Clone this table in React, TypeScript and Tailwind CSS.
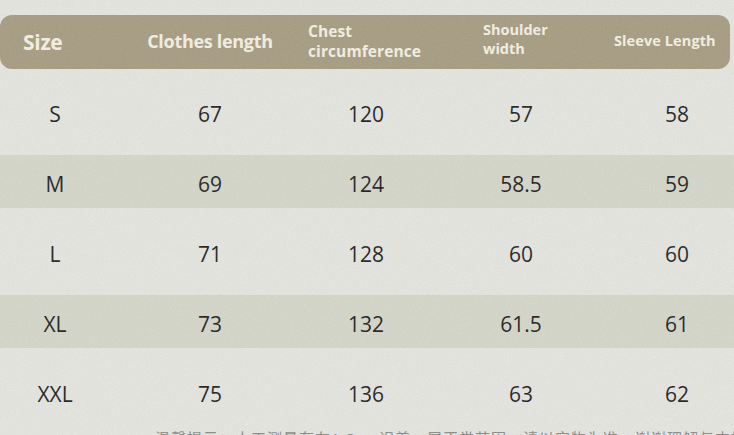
import React from "react";

const rows = [
  ["S", "67", "120", "57", "58"],
  ["M", "69", "124", "58.5", "59"],
  ["L", "71", "128", "60", "60"],
  ["XL", "73", "132", "61.5", "61"],
  ["XXL", "75", "136", "63", "62"],
];

export default function App() {
  return (
    <div
      className="relative w-[734px] h-[435px] overflow-hidden bg-[#e6e6e1] pt-[15px]"
      style={{ fontFamily: '"Open Sans", "Noto Sans", "Noto Sans CJK SC", sans-serif' }}
    >
      {/* header */}
      <div className="grid grid-cols-[110px_200px_173px_134px_113px] h-[54px] w-[730px] rounded-[12px] bg-[#a69b80] text-[#f5f1e3] font-bold items-center">
        <div className="pl-[23px] text-[21px] leading-none pt-[1px] tracking-[-0.3px]">Size</div>
        <div className="text-center text-[18px] leading-none -mt-[3px] tracking-[-0.3px]">Clothes length</div>
        <div className="text-[15.5px] leading-[20px] -ml-[2px] -mt-[2px] tracking-[0.1px]">
          <div>Chest</div>
          <div>circumference</div>
        </div>
        <div className="text-[14.5px] leading-[19px] -mt-[7px]">
          <div>Shoulder</div>
          <div>width</div>
        </div>
        <div className="text-[14.5px] leading-none -ml-[3px] -mt-[1px] tracking-[0.1px]">Sleeve Length</div>
      </div>

      <div className="mt-[11px]">
        {rows.map((r, i) => (
          <div key={r[0]} className="h-[70px] pt-[5px]">
            <div
              className={`grid grid-cols-[110px_200px_112px_198px_114px] h-[53px] items-center pt-[6px] text-[21px] text-[#1c1c1c] ${
                i % 2 === 1 ? "bg-[#d6d7ca]" : ""
              }`}
            >
              {r.map((c, j) => (
                <div key={j} className="text-center leading-none">
                  {c}
                </div>
              ))}
            </div>
          </div>
        ))}
      </div>

      <div className="absolute left-[155px] top-[427px] whitespace-nowrap text-[15px] text-[#8a8a86] tracking-[1px]">
        温馨提示：人工测量存在1-3cm误差，属正常范围，请以实物为准，谢谢理解与支持
      </div>

      <svg className="pointer-events-none absolute inset-0 opacity-[0.18]" width="734" height="435">
        <filter id="n">
          <feTurbulence type="fractalNoise" baseFrequency="0.9" numOctaves="2" stitchTiles="stitch" />
          <feColorMatrix type="saturate" values="0" />
        </filter>
        <rect width="734" height="435" filter="url(#n)" />
      </svg>
    </div>
  );
}
